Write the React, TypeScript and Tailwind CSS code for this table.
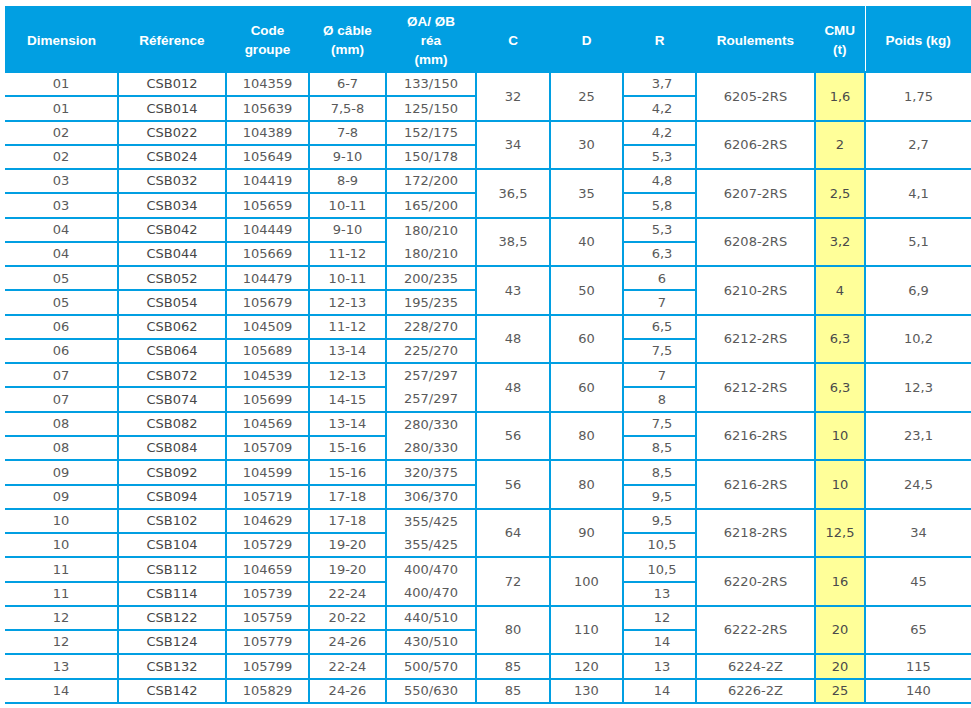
import React from "react";

type Group = {
  d: string;
  rows: [string, string, string, string, string][];
  c: string;
  dd: string;
  roul: string;
  cmu: string;
  poids: string;
  mergeA?: boolean;
};

const groups: Group[] = [
  { d: "01", rows: [["CSB012", "104359", "6-7", "133/150", "3,7"], ["CSB014", "105639", "7,5-8", "125/150", "4,2"]], c: "32", dd: "25", roul: "6205-2RS", cmu: "1,6", poids: "1,75" },
  { d: "02", rows: [["CSB022", "104389", "7-8", "152/175", "4,2"], ["CSB024", "105649", "9-10", "150/178", "5,3"]], c: "34", dd: "30", roul: "6206-2RS", cmu: "2", poids: "2,7" },
  { d: "03", rows: [["CSB032", "104419", "8-9", "172/200", "4,8"], ["CSB034", "105659", "10-11", "165/200", "5,8"]], c: "36,5", dd: "35", roul: "6207-2RS", cmu: "2,5", poids: "4,1" },
  { d: "04", rows: [["CSB042", "104449", "9-10", "180/210", "5,3"], ["CSB044", "105669", "11-12", "180/210", "6,3"]], c: "38,5", dd: "40", roul: "6208-2RS", cmu: "3,2", poids: "5,1", mergeA: true },
  { d: "05", rows: [["CSB052", "104479", "10-11", "200/235", "6"], ["CSB054", "105679", "12-13", "195/235", "7"]], c: "43", dd: "50", roul: "6210-2RS", cmu: "4", poids: "6,9" },
  { d: "06", rows: [["CSB062", "104509", "11-12", "228/270", "6,5"], ["CSB064", "105689", "13-14", "225/270", "7,5"]], c: "48", dd: "60", roul: "6212-2RS", cmu: "6,3", poids: "10,2" },
  { d: "07", rows: [["CSB072", "104539", "12-13", "257/297", "7"], ["CSB074", "105699", "14-15", "257/297", "8"]], c: "48", dd: "60", roul: "6212-2RS", cmu: "6,3", poids: "12,3", mergeA: true },
  { d: "08", rows: [["CSB082", "104569", "13-14", "280/330", "7,5"], ["CSB084", "105709", "15-16", "280/330", "8,5"]], c: "56", dd: "80", roul: "6216-2RS", cmu: "10", poids: "23,1", mergeA: true },
  { d: "09", rows: [["CSB092", "104599", "15-16", "320/375", "8,5"], ["CSB094", "105719", "17-18", "306/370", "9,5"]], c: "56", dd: "80", roul: "6216-2RS", cmu: "10", poids: "24,5" },
  { d: "10", rows: [["CSB102", "104629", "17-18", "355/425", "9,5"], ["CSB104", "105729", "19-20", "355/425", "10,5"]], c: "64", dd: "90", roul: "6218-2RS", cmu: "12,5", poids: "34", mergeA: true },
  { d: "11", rows: [["CSB112", "104659", "19-20", "400/470", "10,5"], ["CSB114", "105739", "22-24", "400/470", "13"]], c: "72", dd: "100", roul: "6220-2RS", cmu: "16", poids: "45", mergeA: true },
  { d: "12", rows: [["CSB122", "105759", "20-22", "440/510", "12"], ["CSB124", "105779", "24-26", "430/510", "14"]], c: "80", dd: "110", roul: "6222-2RS", cmu: "20", poids: "65" },
  { d: "13", rows: [["CSB132", "105799", "22-24", "500/570", "13"]], c: "85", dd: "120", roul: "6224-2Z", cmu: "20", poids: "115" },
  { d: "14", rows: [["CSB142", "105829", "24-26", "550/630", "14"]], c: "85", dd: "130", roul: "6226-2Z", cmu: "25", poids: "140" },
];

const td = "border-2 border-[#019fe2] p-0 text-center align-middle";
const th = "p-0 pt-[3px] text-center align-middle";

export default function App() {
  return (
    <div className="min-h-screen bg-white pl-[5px] pt-[6px]">
      <table
        className="w-[966px] table-fixed border-collapse text-[13px] text-[#5a5a5a]"
        style={{ fontFamily: '"DejaVu Sans", Verdana, sans-serif' }}
      >
        <colgroup>
          <col className="w-[113px]" />
          <col className="w-[108px]" />
          <col className="w-[83px]" />
          <col className="w-[77px]" />
          <col className="w-[90px]" />
          <col className="w-[74px]" />
          <col className="w-[73px]" />
          <col className="w-[73px]" />
          <col className="w-[119px]" />
          <col className="w-[50px]" />
          <col className="w-[106px]" />
        </colgroup>
        <thead>
          <tr
            className="h-[66px] bg-[#019fe2] text-[13.5px] font-bold leading-[19px] text-white"
            style={{ fontFamily: '"Liberation Sans", Arial, sans-serif' }}
          >
            <th className={th}>Dimension</th>
            <th className={th}>Référence</th>
            <th className={th}>
              Code
              <br />
              groupe
            </th>
            <th className={th}>
              Ø câble
              <br />
              (mm)
            </th>
            <th className={th}>
              ØA/ ØB
              <br />
              réa
              <br />
              (mm)
            </th>
            <th className={th}>C</th>
            <th className={th}>D</th>
            <th className={th}>R</th>
            <th className={th}>Roulements</th>
            <th className={th}>
              CMU
              <br />
              (t)
            </th>
            <th className={`${th} border-l border-white`}>Poids (kg)</th>
          </tr>
        </thead>
        <tbody>
          {groups.map((g) => {
            const span = g.rows.length;
            return g.rows.map((r, i) => (
              <tr key={g.d + i} className="h-[24.27px]">
                <td className={`${td} border-l-0`}>{g.d}</td>
                <td className={`${td} text-[#474747]`}>{r[0]}</td>
                <td className={td}>{r[1]}</td>
                <td className={td}>{r[2]}</td>
                {g.mergeA ? (
                  i === 0 ? (
                    <td className={td} rowSpan={2}>
                      <div className="flex flex-col">
                        <div className="flex h-[23px] items-center justify-center">{g.rows[0][3]}</div>
                        <div className="flex h-[23px] items-center justify-center">{g.rows[1][3]}</div>
                      </div>
                    </td>
                  ) : null
                ) : (
                  <td className={td}>{r[3]}</td>
                )}
                {i === 0 && (
                  <td className={td} rowSpan={span}>
                    {g.c}
                  </td>
                )}
                {i === 0 && (
                  <td className={td} rowSpan={span}>
                    {g.dd}
                  </td>
                )}
                <td className={`${td} pl-[5px]`}>{r[4]}</td>
                {i === 0 && (
                  <td className={td} rowSpan={span}>
                    {g.roul}
                  </td>
                )}
                {i === 0 && (
                  <td className={`${td} bg-[#ffff99] text-[#4a4a4a]`} rowSpan={span}>
                    {g.cmu}
                  </td>
                )}
                {i === 0 && (
                  <td className={`${td} border-r-0`} rowSpan={span}>
                    {g.poids}
                  </td>
                )}
              </tr>
            ));
          })}
        </tbody>
      </table>
    </div>
  );
}
